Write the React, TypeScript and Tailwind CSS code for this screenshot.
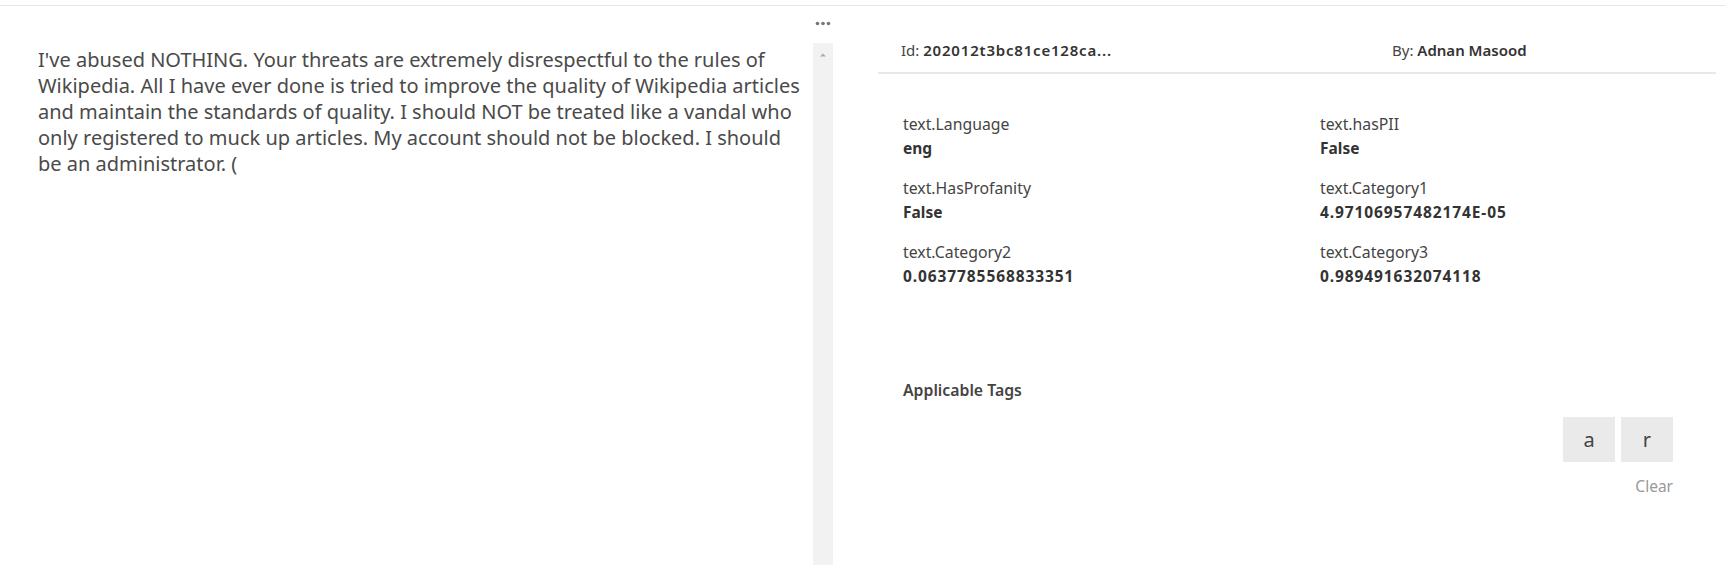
import React from 'react'

const fields = [
  { label: 'text.Language', value: 'eng' },
  { label: 'text.hasPII', value: 'False' },
  { label: 'text.HasProfanity', value: 'False' },
  { label: 'text.Category1', value: '4.97106957482174E-05', num: true },
  { label: 'text.Category2', value: '0.0637785568833351', num: true },
  { label: 'text.Category3', value: '0.989491632074118', num: true },
]

const comment = [
  "I've abused NOTHING. Your threats are extremely disrespectful to the rules of",
  'Wikipedia. All I have ever done is tried to improve the quality of Wikipedia articles',
  'and maintain the standards of quality. I should NOT be treated like a vandal who',
  'only registered to muck up articles. My account should not be blocked. I should',
  'be an administrator. (',
]

export default function App() {
  return (
    <div className="w-[1725px] h-[565px] bg-white overflow-hidden flex flex-col font-['Noto_Sans',sans-serif] text-[#444]">
      {/* top rule */}
      <div className="h-[5px] shrink-0" />
      <div className="h-px shrink-0 bg-[#e6e6e6]" />

      <div className="flex flex-1 min-h-0">
        {/* comment text */}
        <div className="w-[813px] shrink-0 pl-[38px] pt-[41px]">
          <div className="text-[20px] leading-[26px] text-[#4a4a4a]">
            {comment.map((line, i) => (
              <div key={i} className="whitespace-nowrap">{line}</div>
            ))}
          </div>
        </div>

        {/* splitter / scrollbar */}
        <div className="w-[20px] shrink-0 flex flex-col items-center">
          <svg width="16" height="5" viewBox="0 0 16 5" className="mt-[15px]">
            <circle cx="2.5" cy="2.5" r="1.8" fill="#777" />
            <circle cx="8" cy="2.5" r="1.8" fill="#777" />
            <circle cx="13.5" cy="2.5" r="1.8" fill="#777" />
          </svg>
          <div className="mt-[17px] w-full flex-1 bg-[#f2f2f2] flex justify-center pt-[9px]">
            <svg width="8" height="5" viewBox="0 0 8 5">
              <path d="M1 4.5 L4 1.5 L7 4.5 Z" fill="#aaa" />
            </svg>
          </div>
        </div>

        {/* details panel */}
        <div className="flex-1 pl-[45px] pr-[9px]">
          <div className="flex text-[15px] leading-[20px] pt-[34px] pb-[12px] px-[23px] border-b-2 border-[#e8e8e8] text-[#444]">
            <div className="w-[491px]">
              Id: <span className="font-semibold text-[#333] tracking-[0.8px]">202012t3bc81ce128ca...</span>
            </div>
            <div>
              By: <span className="font-semibold text-[#333]">Adnan Masood</span>
            </div>
          </div>

          <div className="pl-[25px] pr-[43px] pt-[40px]">
            <div className="grid grid-cols-[417px_1fr] gap-y-[19px]">
              {fields.map((f) => (
                <div key={f.label}>
                  <div className="text-[15.8px] leading-[20px] text-[#444]">{f.label}</div>
                  <div
                    className={
                      f.num
                        ? 'mt-[3px] text-[15.5px] leading-[22px] font-bold text-[#333] tracking-[0.9px]'
                        : 'mt-[3px] text-[15.5px] leading-[22px] font-bold text-[#333]'
                    }
                  >
                    {f.value}
                  </div>
                </div>
              ))}
            </div>

            <div className="mt-[93px] text-[15.8px] leading-[20px] font-semibold text-[#444]">Applicable Tags</div>

            <div className="flex justify-end gap-[6px] mt-[17px]">
              <button className="w-[52px] h-[45px] bg-[#eaeaea] text-[20px] text-[#444]">a</button>
              <button className="w-[52px] h-[45px] bg-[#eaeaea] text-[20px] text-[#444]">r</button>
            </div>
            <div className="flex justify-end mt-[14px]">
              <span className="text-[15.5px] leading-[20px] text-[#999]">Clear</span>
            </div>
          </div>
        </div>
      </div>
    </div>
  )
}
